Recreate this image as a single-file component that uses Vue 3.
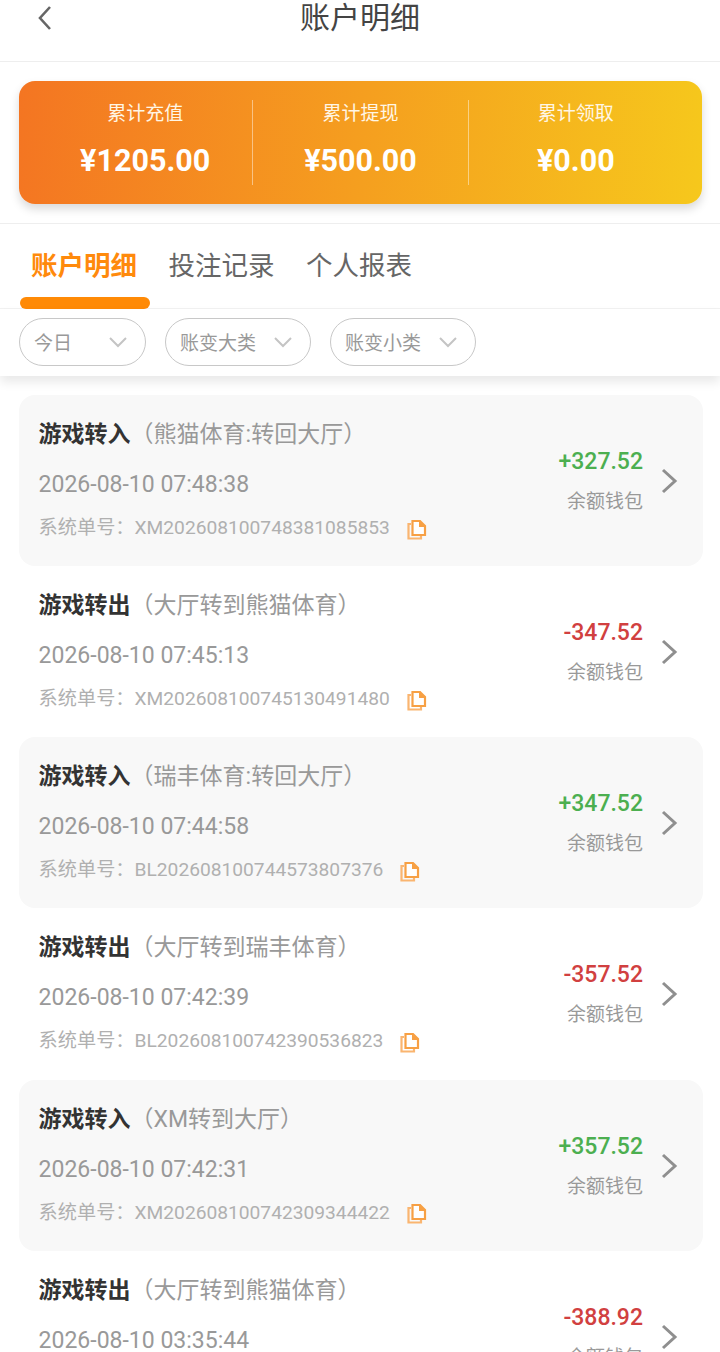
<script setup>
const stats = [
  { label: '累计充值', value: '¥1205.00' },
  { label: '累计提现', value: '¥500.00' },
  { label: '累计领取', value: '¥0.00' },
]

const tabs = ['账户明细', '投注记录', '个人报表']
const filters = ['今日', '账变大类', '账变小类']

const records = [
  { type: '游戏转入', note: '（熊猫体育:转回大厅）', time: '2026-08-10 07:48:38', no: 'XM202608100748381085853', amount: '+327.52' },
  { type: '游戏转出', note: '（大厅转到熊猫体育）', time: '2026-08-10 07:45:13', no: 'XM202608100745130491480', amount: '-347.52' },
  { type: '游戏转入', note: '（瑞丰体育:转回大厅）', time: '2026-08-10 07:44:58', no: 'BL202608100744573807376', amount: '+347.52' },
  { type: '游戏转出', note: '（大厅转到瑞丰体育）', time: '2026-08-10 07:42:39', no: 'BL202608100742390536823', amount: '-357.52' },
  { type: '游戏转入', note: '（XM转到大厅）', time: '2026-08-10 07:42:31', no: 'XM202608100742309344422', amount: '+357.52' },
  { type: '游戏转出', note: '（大厅转到熊猫体育）', time: '2026-08-10 03:35:44', no: '', amount: '-388.92' },
]
</script>

<template>
  <div class="page">
    <header class="header">
      <svg class="back" width="16" height="26" viewBox="0 0 16 26">
        <path d="M13 2 L3 13 L13 24" fill="none" stroke="#666" stroke-width="2.6" />
      </svg>
      <h1>账户明细</h1>
    </header>

    <section class="summary">
      <div class="summary-card">
        <div v-for="s in stats" :key="s.label" class="stat">
          <div class="stat-label">{{ s.label }}</div>
          <div class="stat-value">{{ s.value }}</div>
        </div>
      </div>
    </section>

    <nav class="tabs">
      <div v-for="(t, i) in tabs" :key="t" class="tab" :class="{ active: i === 0 }">{{ t }}</div>
    </nav>

    <div class="filters">
      <div v-for="f in filters" :key="f" class="pill">
        <span>{{ f }}</span>
        <svg width="20" height="12" viewBox="0 0 20 12">
          <path d="M2 2 L10 10 L18 2" fill="none" stroke="#c4c4c4" stroke-width="2" />
        </svg>
      </div>
    </div>

    <div class="list">
      <div v-for="(r, i) in records" :key="r.time" class="record" :class="{ shaded: i % 2 === 0 }">
        <div class="info">
          <div class="title"><b>{{ r.type }}</b><span>{{ r.note }}</span></div>
          <div class="time">{{ r.time }}</div>
          <div v-if="r.no" class="order">
            <span>系统单号：{{ r.no }}</span>
            <svg width="20" height="21" viewBox="0 0 20 21">
              <path d="M4 5 H1.5 V19.5 H14 V17" fill="none" stroke="#fab570" stroke-width="2.2" />
              <path d="M5.5 2 H13 L18 7 V16 H5.5 Z" fill="#fff" stroke="#f7a044" stroke-width="2.2" />
              <path d="M12 1.5 L18.5 8 H12 Z" fill="#f7a044" />
            </svg>
          </div>
        </div>
        <div class="side">
          <div class="amount" :class="r.amount[0] === '+' ? 'plus' : 'minus'">{{ r.amount }}</div>
          <div class="wallet">余额钱包</div>
        </div>
        <svg class="arrow" width="17" height="26" viewBox="0 0 17 26">
          <path d="M2 2 L14 13 L2 24" fill="none" stroke="#8f8f8f" stroke-width="3" />
        </svg>
      </div>
    </div>
  </div>
</template>

<style>
html, body {
  margin: 0;
  background: #fff;
  overflow: hidden;
}
</style>

<style scoped>
.page {
  width: 720px;
  height: 1352px;
  overflow: hidden;
  font-family: Roboto, "Noto Sans CJK SC", sans-serif;
  background: #fff;
}

.header {
  height: 62px;
  box-sizing: border-box;
  border-bottom: 1px solid #eeeeee;
  position: relative;
  display: flex;
  justify-content: center;
}

.header h1 {
  margin: 0;
  font-size: 30px;
  line-height: 36px;
  font-weight: 400;
  color: #444;
}

.back {
  position: absolute;
  left: 37px;
  top: 5px;
}

.summary {
  height: 162px;
  padding: 19px 18px 0 19px;
  box-sizing: border-box;
  border-bottom: 1px solid #eeeeee;
}

.summary-card {
  height: 123px;
  border-radius: 16px;
  background: linear-gradient(95deg, #f47522, #f6c81c);
  box-shadow: 0 5px 10px rgba(0, 0, 0, 0.15);
  display: flex;
  padding: 19px 19px;
  box-sizing: border-box;
}

.stat {
  flex: 1;
  text-align: center;
  color: #fff;
  border-right: 1px solid rgba(255, 255, 255, 0.45);
}

.stat:last-child {
  border-right: none;
}

.stat-label {
  font-size: 19px;
  line-height: 28px;
  color: #fff6e5;
}

.stat-value {
  font-size: 30.5px;
  line-height: 36px;
  font-weight: 700;
  margin-top: 15px;
}

.tabs {
  height: 85px;
  border-bottom: 1px solid #f2f2f2;
  display: flex;
  gap: 31.5px;
  padding-left: 31px;
  box-sizing: border-box;
}

.tab {
  font-size: 26.5px;
  line-height: 36px;
  padding-top: 24px;
  color: #666;
  position: relative;
}

.tab.active {
  color: #ff8a0c;
  font-weight: 700;
}

.tab.active::after {
  content: '';
  position: absolute;
  left: -11px;
  width: 130px;
  top: 73px;
  height: 12px;
  border-radius: 6px;
  background: #ff8a06;
}

.filters {
  height: 67px;
  box-sizing: border-box;
  padding: 9px 19px 0;
  display: flex;
  gap: 19px;
  box-shadow: 0 6px 10px rgba(0, 0, 0, 0.09);
  position: relative;
}

.pill {
  height: 48px;
  box-sizing: border-box;
  border: 1px solid #c8c8c8;
  border-radius: 24px;
  padding: 0 17px 2px 14px;
  display: flex;
  align-items: center;
  justify-content: space-between;
  width: 146px;
  font-size: 19px;
  color: #999;
}

.pill svg {
  margin-top: 2px;
}

.pill:first-child {
  width: 127px;
}

.list {
  padding: 19px 17px 0 19px;
}

.record {
  height: 171.15px;
  box-sizing: border-box;
  padding: 22px 25px 0 19.6px;
  border-radius: 16px;
  display: flex;
  position: relative;
}

.record.shaded {
  background: #f8f8f8;
}

.info {
  flex: 1;
}

.title {
  font-size: 23px;
  line-height: 36px;
  color: #999;
}

.title b {
  color: #333;
  font-weight: 700;
}

.time {
  font-size: 23px;
  line-height: 32px;
  color: #999;
  margin-top: 16px;
}

.order {
  font-size: 19.2px;
  line-height: 26px;
  color: #b0b0b0;
  margin-top: 14px;
  display: flex;
  align-items: center;
  gap: 17px;
}

.order svg {
  margin-top: 2px;
}

.side {
  text-align: right;
  padding-top: 29px;
  margin-right: 18px;
}

.amount {
  font-size: 23px;
  line-height: 32px;
  font-weight: 500;
}

.amount.plus {
  color: #4caf50;
}

.amount.minus {
  color: #d14040;
}

.wallet {
  font-size: 19px;
  line-height: 26px;
  color: #999;
  margin-top: 11px;
}

.arrow {
  margin-top: 51px;
}
</style>
